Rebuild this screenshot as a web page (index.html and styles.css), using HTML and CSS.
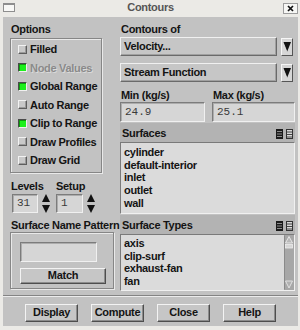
FILE: index.html
```html
<!DOCTYPE html>
<html>
<head>
<meta charset="utf-8">
<title>Contours</title>
<link rel="stylesheet" href="styles.css">
</head>
<body>
<div class="window">
  <div class="titlebar">
    <span class="win-icon"></span>
    <span class="title">Contours</span>
    <span class="close"><svg width="13" height="9" viewBox="0 0 13 9"><path d="M4 2L9 7M9 2L4 7" stroke="#111" stroke-width="1.7"/></svg></span>
  </div>
  <div class="panel">
    <div class="main">
      <div class="left">
        <div class="label">Options</div>
        <div class="frame options">
          <div class="check"><span class="box"></span>Filled</div>
          <div class="check disabled"><span class="box on"></span>Node Values</div>
          <div class="check"><span class="box on"></span>Global Range</div>
          <div class="check"><span class="box"></span>Auto Range</div>
          <div class="check"><span class="box on"></span>Clip to Range</div>
          <div class="check"><span class="box"></span>Draw Profiles</div>
          <div class="check"><span class="box"></span>Draw Grid</div>
        </div>
        <div class="spin-labels"><span class="lv">Levels</span><span>Setup</span></div>
        <div class="spins">
          <div class="num lvnum">31</div>
          <svg class="spinner" width="8" height="19" viewBox="0 0 8 19"><path d="M4 0L8 8H0Z M0 11H8L4 19Z" fill="#111"/></svg>
          <div class="num setnum">1</div>
          <svg class="spinner" width="8" height="19" viewBox="0 0 8 19"><path d="M4 0L8 8H0Z M0 11H8L4 19Z" fill="#111"/></svg>
        </div>
        <div class="label pat-label">Surface Name Pattern</div>
        <div class="frame pattern">
          <div class="textbox"></div>
          <div class="btn match">Match</div>
        </div>
      </div>
      <div class="right">
        <div class="label">Contours of</div>
        <div class="dd-row first">
          <div class="dd">Velocity...</div>
          <div class="ddbtn"><svg width="8" height="10" viewBox="0 0 8 10"><path d="M0 0H8L4 10Z" fill="#111"/><path d="M0 0L4 10" stroke="#eee" stroke-width="0.8"/></svg></div>
        </div>
        <div class="dd-row second">
          <div class="dd">Stream Function</div>
          <div class="ddbtn"><svg width="8" height="10" viewBox="0 0 8 10"><path d="M0 0H8L4 10Z" fill="#111"/><path d="M0 0L4 10" stroke="#eee" stroke-width="0.8"/></svg></div>
        </div>
        <div class="mm-labels"><span class="minl">Min (kg/s)</span><span>Max (kg/s)</span></div>
        <div class="mm-inputs">
          <div class="num mm">24.9</div>
          <div class="num mm">25.1</div>
        </div>
        <div class="hdr">
          <span>Surfaces</span>
          <svg width="18" height="10" viewBox="0 0 18 10"><rect x="0" y="0" width="7" height="10" fill="#1a1a1a"/><path d="M1 2.5H6M1 5H6M1 7.5H6" stroke="#9a9a9a" stroke-width="0.9"/><rect x="10.5" y="0.5" width="6" height="9" fill="#d8d8d8" stroke="#333"/><path d="M11 3H16.5M11 5.5H16.5M11 8H16.5" stroke="#333" stroke-width="0.9"/></svg>
        </div>
        <div class="list surf">
          <div>cylinder</div>
          <div>default-interior</div>
          <div>inlet</div>
          <div>outlet</div>
          <div>wall</div>
        </div>
        <div class="hdr">
          <span>Surface Types</span>
          <svg width="18" height="10" viewBox="0 0 18 10"><rect x="0" y="0" width="7" height="10" fill="#1a1a1a"/><path d="M1 2.5H6M1 5H6M1 7.5H6" stroke="#9a9a9a" stroke-width="0.9"/><rect x="10.5" y="0.5" width="6" height="9" fill="#d8d8d8" stroke="#333"/><path d="M11 3H16.5M11 5.5H16.5M11 8H16.5" stroke="#333" stroke-width="0.9"/></svg>
        </div>
        <div class="list types">
          <div class="items">
            <div>axis</div>
            <div>clip-surf</div>
            <div>exhaust-fan</div>
            <div>fan</div>
          </div>
          <svg class="scroll" width="10" height="55" viewBox="0 0 10 55"><rect width="10" height="55" fill="#a7a7a7"/><path d="M0.5 0.5V54.5" stroke="#8a8a8a"/><path d="M5 1.5L8.5 8H1.5Z" fill="#b8b8b8" stroke="#ececec" stroke-width="0.9"/><rect x="1.5" y="9.5" width="7" height="3.5" fill="#d6d6d6" stroke="#eeeeee" stroke-width="0.8"/><path d="M1.5 46H8.5L5 53Z" fill="#b0b0b0" stroke="#e6e6e6" stroke-width="0.9"/></svg>
        </div>
      </div>
    </div>
    <div class="sep"></div>
    <div class="buttons">
      <div class="btn">Display</div>
      <div class="btn">Compute</div>
      <div class="btn">Close</div>
      <div class="btn">Help</div>
    </div>
  </div>
</div>
</body>
</html>
```

FILE: styles.css
```css
* { box-sizing: border-box; margin: 0; padding: 0; }
html, body { width: 300px; height: 330px; overflow: hidden; }
body {
  background: #ebeae6;
  font: bold 11px/14px "Liberation Sans", Arial, sans-serif;
  letter-spacing: -0.3px;
  color: #141414;
}
.window { width: 300px; height: 330px; display: flex; flex-direction: column; }

.titlebar {
  height: 17px;
  display: grid;
  grid-template-columns: 1fr auto 1fr;
  align-items: start;
  padding: 3px 2px 0 3px;
}
.win-icon {
  justify-self: start;
  width: 12px; height: 9px;
  border: 1px solid #8e8e8e;
  border-top-width: 2px;
  background: #f8f8f6;
}
.title { color: #555; line-height: 12px; margin-top: -2px; }
.close {
  justify-self: end;
  width: 15px; height: 11px;
  border: 1px solid #9c9c9c;
  background: #f6f6f4;
  display: flex;
}

.panel {
  margin-left: 3px;
  width: 295px; height: 309px;
  background: #c2c2c2;
  display: flex; flex-direction: column;
}
.main { display: flex; padding: 5px 0 0 7px; }
.left { width: 104px; display: flex; flex-direction: column; }
.right { width: 175px; margin-left: 6px; display: flex; flex-direction: column; }
.label { height: 14px; padding-left: 1px; white-space: nowrap; }

.frame {
  border: 1px solid #868686;
  box-shadow: 1px 1px 0 #e9e9e9, inset 1px 1px 0 #e9e9e9;
}
.options { width: 92px; height: 135px; margin-top: 2px; padding: 1px 0 0 7px; }
.check { height: 18.5px; display: flex; align-items: center; white-space: nowrap; }
.box {
  width: 9px; height: 9px; margin-right: 3px; flex: none;
  background: #c9c9c9;
  border: 1px solid;
  border-color: #f2f2f2 #5e5e5e #5e5e5e #f2f2f2;
  box-shadow: inset -1px -1px 0 #9a9a9a;
}
.box.on {
  background: #1cf01c;
  border-color: #4a4a4a #f0f0f0 #f0f0f0 #4a4a4a;
  box-shadow: inset 1px 1px 0 #0f9a0f;
}
.disabled { color: #8a8a8a; text-shadow: 1px 1px 0 #dadada; }

.spin-labels { display: flex; height: 14px; margin-top: 6px; padding-left: 1px; }
.spin-labels .lv { width: 45px; }
.spins { display: flex; align-items: flex-start; height: 19px; margin-top: 1px; padding-left: 2px; }
.num {
  height: 19px;
  background: #d6d6d6;
  border: 1px solid;
  border-color: #7c7c7c #f0f0f0 #f0f0f0 #7c7c7c;
  box-shadow: inset 1px 1px 0 #acacac;
  font: 11px/17px "Liberation Mono", "Courier New", monospace;
  letter-spacing: 0;
  color: #3a3a3a;
  padding-left: 4px;
}
.lvnum { width: 26px; }
.setnum { width: 27px; }
.spinner { margin-left: 4px; margin-right: 6px; flex: none; }

.pat-label { margin-top: 5px; }
.pattern { width: 104px; height: 57px; padding: 9px 0 0 9px; }
.textbox {
  width: 77px; height: 20px;
  background: #d6d6d6;
  border: 1px solid;
  border-color: #7c7c7c #f0f0f0 #f0f0f0 #7c7c7c;
  box-shadow: inset 1px 1px 0 #acacac;
}
.btn {
  width: 53px; height: 18px;
  background: #c6c6c6;
  border: 1px solid;
  border-color: #f3f3f3 #4e4e4e #4e4e4e #f3f3f3;
  box-shadow: inset -1px -1px 0 #8c8c8c;
  text-align: center;
  line-height: 15px;
  white-space: nowrap;
}
.match { width: 86px; height: 16px; margin-top: 6px; line-height: 13px; }

.dd-row { display: flex; align-items: flex-start; gap: 4px; }
.dd-row.first { margin-top: 1px; }
.dd-row.second { margin-top: 7px; }
.dd {
  width: 157px; height: 19px;
  background: #c6c6c6;
  border: 1px solid;
  border-color: #f0f0f0 #6a6a6a #6a6a6a #f0f0f0;
  box-shadow: inset -1px -1px 0 #a0a0a0;
  padding-left: 3px;
  line-height: 16px;
}
.ddbtn {
  width: 12px; height: 18px; margin-top: 1px;
  background: #d6d6d6;
  border: 1px solid;
  border-color: #f6f6f6 #555 #555 #f6f6f6;
  display: flex; align-items: center; justify-content: center;
}
.mm-labels { display: flex; height: 14px; margin-top: 6px; padding-left: 1px; }
.mm-labels .minl { width: 92px; }
.mm-inputs { display: grid; grid-template-columns: 85px 83px; gap: 7px; }
.num.mm { height: 20px; line-height: 18px; }

.hdr {
  height: 19px;
  margin-top: 1px;
  background: #b3b3b3;
  display: flex; align-items: center; justify-content: space-between;
  padding: 0 1px 0 2px;
}
.hdr svg { margin-top: 3px; }
.list {
  background: #dbdbdb;
  border: 1px solid;
  border-color: #7a7a7a #f0f0f0 #f0f0f0 #7a7a7a;
  line-height: 12.7px;
  white-space: nowrap;
}
.surf { height: 72px; padding: 3px 0 0 3px; }
.list.types { height: 57px; display: flex; }
.types .items { flex: 1; padding: 2px 0 0 3px; }
.scroll { flex: none; }

.sep {
  height: 2px;
  margin-top: 4px;
  border-top: 1px solid #848484;
  border-bottom: 1px solid #ececec;
}
.buttons { display: flex; justify-content: center; gap: 13px; margin-top: 7px; }
```
